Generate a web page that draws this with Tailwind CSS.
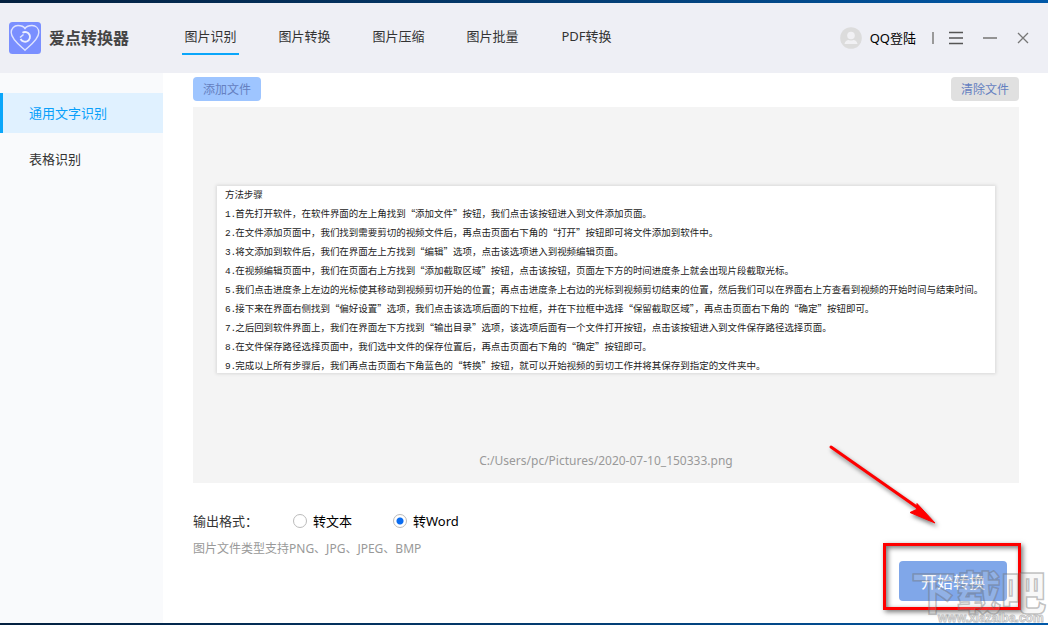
<!DOCTYPE html>
<html lang="zh-CN">
<head>
<meta charset="utf-8">
<meta name="viewport" content="width=device-width, initial-scale=1">
<title>爱点转换器</title>
<script src="https://cdn.jsdelivr.net/npm/@tailwindcss/browser@4"></script>
</head>
<body class="relative flex min-h-screen flex-col overflow-hidden bg-white font-['Noto_Sans','Noto_Sans_CJK_SC',sans-serif] text-[13px] leading-5 text-[#333]">
<div class="h-[3px] bg-linear-to-r from-[#03203f] via-[#034078] via-60% to-[#0058a8]"></div>

<header class="flex h-[70px] items-center bg-[#eeeff5] pr-[18px] pl-[9px]">
  <svg class="size-8" viewBox="0 0 32 32" fill="none" aria-hidden="true">
    <rect width="32" height="32" rx="3.500" fill="#7a8fff"/>
    <path d="M16 28.200C12 24.500 2.200 17.500 2.200 10.600C2.200 6.200 5.200 3.500 9 3.500C12.300 3.500 14.700 4.500 16 6.500C17.300 4.500 19.700 3.500 23 3.500C26.800 3.500 29.800 6.200 29.800 10.600C29.800 17.500 20 24.500 16 28.200Z" stroke="#dfe4ff" stroke-width="1.400"/>
    <path d="M13.500 10.700A4.900 4.900 0 1 1 11.600 16.800" stroke="#eef0ff" stroke-width="1.900"/>
    <path d="M11 15.500L14.500 12.500" stroke="#dfe4ff" stroke-width="1.600"/>
  </svg>
  <h1 class="ml-2 text-base font-bold text-[#444]">爱点转换器</h1>
  <nav class="ml-[53px] flex gap-[37px] self-stretch pt-5 pb-[18px] whitespace-nowrap">
    <a href="#" class="w-[57px] border-b-2 border-[#0aa6fa] pt-[3px] text-center">图片识别</a>
    <a href="#" class="w-[57px] pt-[3px] text-center">图片转换</a>
    <a href="#" class="w-[57px] pt-[3px] text-center">图片压缩</a>
    <a href="#" class="w-[57px] pt-[3px] text-center">图片批量</a>
    <a href="#" class="w-[57px] pt-[3px] text-center">PDF转换</a>
  </nav>
  <div class="ml-auto flex items-center text-black">
    <button class="flex items-center gap-2 text-[13px]">
      <svg class="size-[22px]" viewBox="0 0 22 22" aria-hidden="true"><circle cx="11" cy="11" r="10.800" fill="#dcdcdc"/><circle cx="11" cy="8.500" r="3.800" fill="#f1f1f4"/><path d="M4.500 17c.5-2.600 2.200-4 4.300-4 1.500.7 2.900.7 4.400 0 2.100 0 3.800 1.400 4.300 4z" fill="#f1f1f4"/></svg>
      <span>QQ登陆</span>
    </button>
    <span class="ml-4 h-3 w-[2px] bg-[#999]"></span>
    <button class="ml-[15px]" aria-label="菜单"><svg class="h-3.5 w-3.5" viewBox="0 0 14 14" stroke="#555" stroke-width="1.300"><path d="M0 1.500h14M0 7h14M0 12.500h14"/></svg></button>
    <button class="ml-5" aria-label="最小化"><svg class="h-3.5 w-3.5" viewBox="0 0 14 14" stroke="#888" stroke-width="1.800"><path d="M0 7h14"/></svg></button>
    <button class="ml-[19px]" aria-label="关闭"><svg class="h-3.5 w-3.5" viewBox="0 0 14 14" stroke="#777" stroke-width="1.300"><path d="M2 2l10 10M12 2L2 12"/></svg></button>
  </div>
</header>

<div class="flex flex-1">
  <aside class="w-[163px] shrink-0 bg-[#f9fafc] pt-5">
    <a href="#" class="flex h-10 items-center border-l-3 border-[#0aa6fa] bg-[#e0f1ff] pl-[26px] text-[#0aa0fa]">通用文字识别</a>
    <a href="#" class="mt-1.5 flex h-10 items-center pl-[29px]">表格识别</a>
  </aside>

  <main class="flex min-w-0 flex-1 flex-col pt-1 pr-[29px] pl-[30px]">
    <div class="flex justify-between text-xs text-[#6580c0]">
      <button class="h-6 w-[68px] rounded bg-[#9ec5ff] pt-px">添加文件</button>
      <button class="h-6 w-[68px] rounded bg-[#e0e0e0] pt-px">清除文件</button>
    </div>

    <section class="mt-1.5 flex flex-col items-center bg-[#f4f4f4] px-6 pt-[79px] pb-3">
      <svg class="w-full bg-white shadow-[0_0_3px_1px_#d8d8d8]" viewBox="0 0 984 236" role="img" aria-label="方法步骤" font-family="'Noto Sans CJK SC', sans-serif" font-size="12" fill="#222">
        <g id="doc"></g>
      </svg>
      <p class="mt-[78px] text-xs leading-5 text-[#999]">C:/Users/pc/Pictures/2020-07-10_150333.png</p>
    </section>

    <div class="mt-7 flex items-center" role="radiogroup" aria-labelledby="fmt-label">
      <span id="fmt-label" class="w-[100px]">输出格式：</span>
      <label class="flex w-[100px] items-center gap-1.5 text-black"><input type="radio" name="fmt" class="size-3.5 appearance-none rounded-full border border-[#bbb] bg-white checked:bg-[radial-gradient(circle,#0a6cf0_3px,#fff_4px)]">转文本</label>
      <label class="flex items-center gap-1.5 text-black"><input type="radio" name="fmt" checked class="size-3.5 appearance-none rounded-full border border-[#bbb] bg-white checked:bg-[radial-gradient(circle,#0a6cf0_3px,#fff_4px)]">转Word</label>
    </div>
    <p class="mt-2 text-xs leading-5 text-[#999]">图片文件类型支持PNG、JPG、JPEG、BMP</p>

    <div class="relative mt-0.5 mr-3 mb-[22px] self-end">
      <button class="block h-10 w-[108px] rounded bg-[#80a7e9] pt-0.5 text-base text-white">开始转换</button>
      <!-- Callout frame and arrow -->
      <div class="pointer-events-none absolute -top-[18px] -right-[14px] -bottom-[9px] -left-[16px] border-3 border-[#fe0000] shadow-[2px_2px_5px_#777,inset_2px_2px_5px_#777]"></div>
      <svg class="pointer-events-none absolute -top-[119px] -left-[74px] h-[88px] w-[118px] drop-shadow-[2px_3px_2px_#777]" viewBox="0 0 118 88" aria-hidden="true">
        <path d="M6 5L96 68" stroke="#fe0000" stroke-width="3" stroke-linecap="round"/>
        <path d="M110 81L92 61.500L91.500 67.500L85 70.500Z" fill="#fe0000" stroke="#fe0000" stroke-width="1"/>
      </svg>
      <!-- Watermark across the lower right corner -->
      <svg class="pointer-events-none absolute top-2 left-3 h-14 w-36" viewBox="0 0 144 56" font-family="'Noto Sans CJK SC', sans-serif" aria-hidden="true">
        <text x="0" y="41" font-size="45" font-weight="900" fill="#ddd" fill-opacity="0.200" stroke="#666" stroke-opacity="0.400" stroke-width="1.500">下载吧</text>
        <text x="27" y="53" font-family="'Liberation Sans', sans-serif" font-size="12" font-weight="700" fill="#fff" fill-opacity="0.700" stroke="#888" stroke-opacity="0.500" stroke-width="1">www.xiazaiba.com</text>
      </svg>
    </div>
  </main>
</div>
<div class="h-0.5 bg-linear-to-r from-[#03203f] via-[#034078] via-60% to-[#0058a8]"></div>

<script>
const lines = [
  ['', '方法步骤'],
  ['1.', '首先打开软件，在软件界面的左上角找到“添加文件”按钮，我们点击该按钮进入到文件添加页面。'],
  ['2.', '在文件添加页面中，我们找到需要剪切的视频文件后，再点击页面右下角的“打开”按钮即可将文件添加到软件中。'],
  ['3.', '将文添加到软件后，我们在界面左上方找到“编辑”选项，点击该选项进入到视频编辑页面。'],
  ['4.', '在视频编辑页面中，我们在页面右上方找到“添加截取区域”按钮，点击该按钮，页面左下方的时间进度条上就会出现片段截取光标。'],
  ['5.', '我们点击进度条上左边的光标使其移动到视频剪切开始的位置；再点击进度条上右边的光标到视频剪切结束的位置，然后我们可以在界面右上方查看到视频的开始时间与结束时间。'],
  ['6.', '接下来在界面右侧找到“偏好设置”选项，我们点击该选项后面的下拉框，并在下拉框中选择“保留截取区域”，再点击页面右下角的“确定”按钮即可。'],
  ['7.', '之后回到软件界面上，我们在界面左下方找到“输出目录”选项，该选项后面有一个文件打开按钮，点击该按钮进入到文件保存路径选择页面。'],
  ['8.', '在文件保存路径选择页面中，我们选中文件的保存位置后，再点击页面右下角的“确定”按钮即可。'],
  ['9.', '完成以上所有步骤后，我们再点击页面右下角蓝色的“转换”按钮，就可以开始视频的剪切工作并将其保存到指定的文件夹中。']
];
document.getElementById('doc').innerHTML = lines.map(([n, t], i) =>
  `<text y="${15 + i * 24}"><tspan x="10" font-family="Liberation Mono, monospace" font-size="12">${n}</tspan><tspan x="${n ? 23 : 10}">${t}</tspan></text>`).join('');
</script>
</body>
</html>
